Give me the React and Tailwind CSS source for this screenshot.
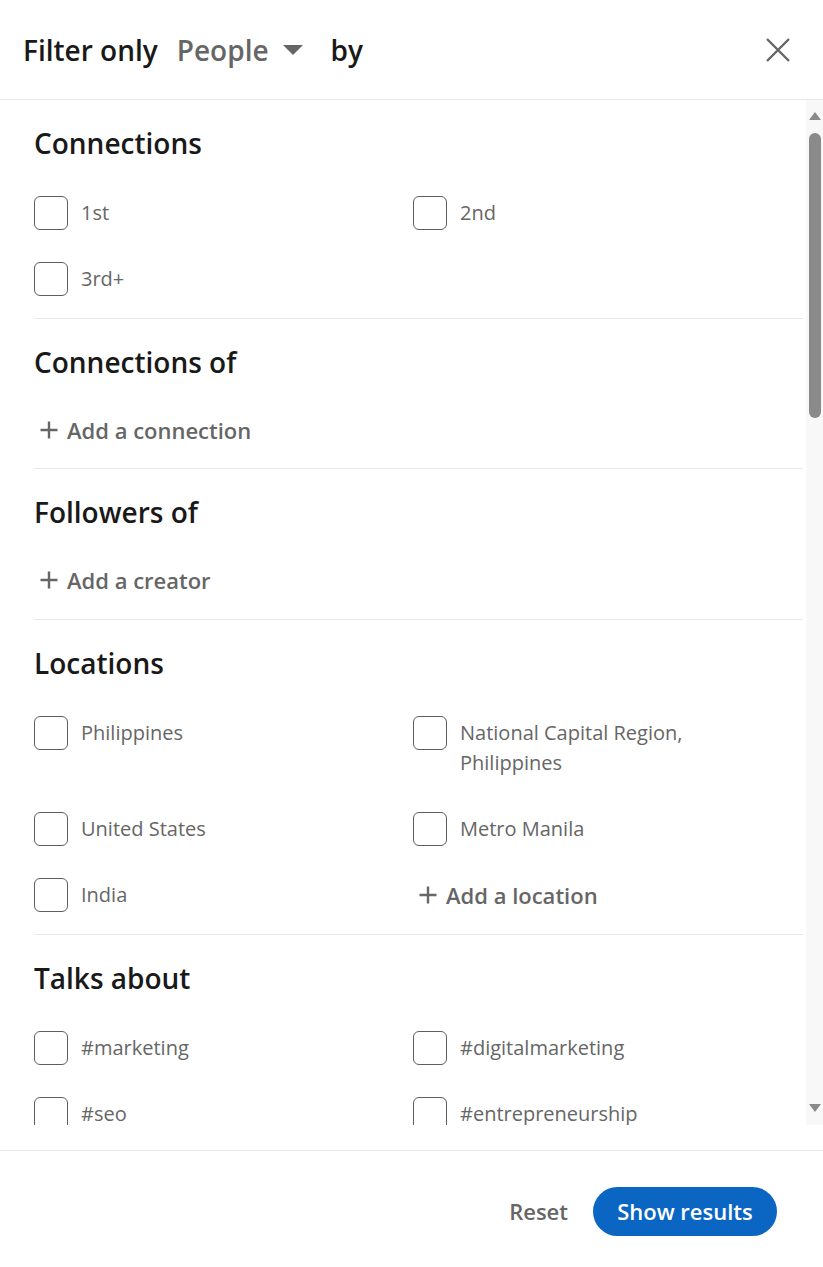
import React from "react";

const font = { fontFamily: '"Open Sans", "Noto Sans", sans-serif' };

function Box() {
  return (
    <span className="block w-[34px] h-[34px] shrink-0 rounded-[6px] border-[1.5px] border-[#5e5e5e] bg-white" />
  );
}

function Check({ label }) {
  return (
    <label className="flex items-start gap-[13px]">
      <Box />
      <span className="pt-[2px] pb-[2px] text-[20px] leading-[30px] text-[#666666]">
        {label}
      </span>
    </label>
  );
}

function PlusIcon() {
  return (
    <svg width="20" height="20" viewBox="0 0 20 20" className="shrink-0">
      <path d="M10 1.5v17M1.5 10h17" stroke="#666666" strokeWidth="2.4" />
    </svg>
  );
}

function AddLink({ label }) {
  return (
    <button className="flex items-center gap-[8px] pl-[5px] h-[30px] text-[22px] font-semibold text-[#666666]">
      <PlusIcon />
      <span className="leading-[30px]">{label}</span>
    </button>
  );
}

function Section({ title, children, pb }) {
  return (
    <section className={`pt-[26px] ${pb}`}>
      <h2 className="text-[28px] leading-[34px] font-semibold text-[#191919]">{title}</h2>
      <div className="mt-[36px]">{children}</div>
    </section>
  );
}

function Grid({ children }) {
  return <div className="grid grid-cols-[379px_1fr] gap-y-[32px]">{children}</div>;
}

export default function App() {
  return (
    <div className="w-[823px] h-[1267px] bg-white flex flex-col overflow-hidden" style={font}>
      <header className="h-[100px] shrink-0 border-b border-[#e8e8e8] flex items-center justify-between pl-[23px] pr-[32px]">
        <div className="flex items-center text-[28px] leading-[34px] font-semibold">
          <span className="text-[#191919]">Filter only</span>
          <span className="ml-[19px] flex items-center text-[#666666]">
            People
            <svg width="20" height="12" viewBox="0 0 20 12" className="ml-[14px]">
              <path d="M0 1h20L10 11z" fill="#666666" />
            </svg>
          </span>
          <span className="ml-[28px] text-[#191919]">by</span>
        </div>
        <svg width="26" height="26" viewBox="0 0 26 26">
          <path d="M2 2l22 22M24 2L2 24" stroke="#666666" strokeWidth="2.4" />
        </svg>
      </header>

      <div className="h-[1025px] shrink-0 flex overflow-hidden">
        <div className="flex-1 min-w-0 pl-[34px] pr-[3px] overflow-hidden">
          <Section title="Connections" pb="pb-[22px] border-b border-[#e8e8e8]">
            <Grid>
              <Check label="1st" />
              <Check label="2nd" />
              <Check label="3rd+" />
            </Grid>
          </Section>
          <Section title="Connections of" pb="pb-[23px] border-b border-[#e8e8e8]">
            <AddLink label="Add a connection" />
          </Section>
          <Section title="Followers of" pb="pb-[24px] border-b border-[#e8e8e8]">
            <AddLink label="Add a creator" />
          </Section>
          <Section title="Locations" pb="pb-[22px] border-b border-[#e8e8e8]">
            <Grid>
              <Check label="Philippines" />
              <Check
                label={
                  <>
                    National Capital Region,
                    <br />
                    Philippines
                  </>
                }
              />
              <Check label="United States" />
              <Check label="Metro Manila" />
              <Check label="India" />
              <div className="pt-[2px]">
                <AddLink label="Add a location" />
              </div>
            </Grid>
          </Section>
          <Section title="Talks about" pb="">
            <Grid>
              <Check label="#marketing" />
              <Check label="#digitalmarketing" />
              <Check label="#seo" />
              <Check label="#entrepreneurship" />
            </Grid>
          </Section>
        </div>
        <div className="w-[17px] shrink-0 bg-[#f8f8f8] flex flex-col items-center">
          <svg width="12" height="8" viewBox="0 0 12 8" className="mt-[12px]">
            <path d="M6 0l6 8H0z" fill="#8a8a8a" />
          </svg>
          <div className="mt-[13px] w-[12px] h-[285px] rounded-full bg-[#8a8a8a]" />
          <div className="flex-1" />
          <svg width="12" height="8" viewBox="0 0 12 8" className="mb-[13px]">
            <path d="M0 0h12L6 8z" fill="#8a8a8a" />
          </svg>
        </div>
      </div>

      <div className="h-[25px] shrink-0" />

      <footer className="flex-1 border-t border-[#e8e8e8] flex justify-end items-start pt-[36px] pr-[46px]">
        <button className="h-[49px] px-[8px] mr-[17px] text-[22px] font-semibold text-[#666666]">
          Reset
        </button>
        <button className="h-[49px] w-[184px] rounded-full bg-[#0a66c2] text-white text-[22px] font-semibold">
          Show results
        </button>
      </footer>
    </div>
  );
}
